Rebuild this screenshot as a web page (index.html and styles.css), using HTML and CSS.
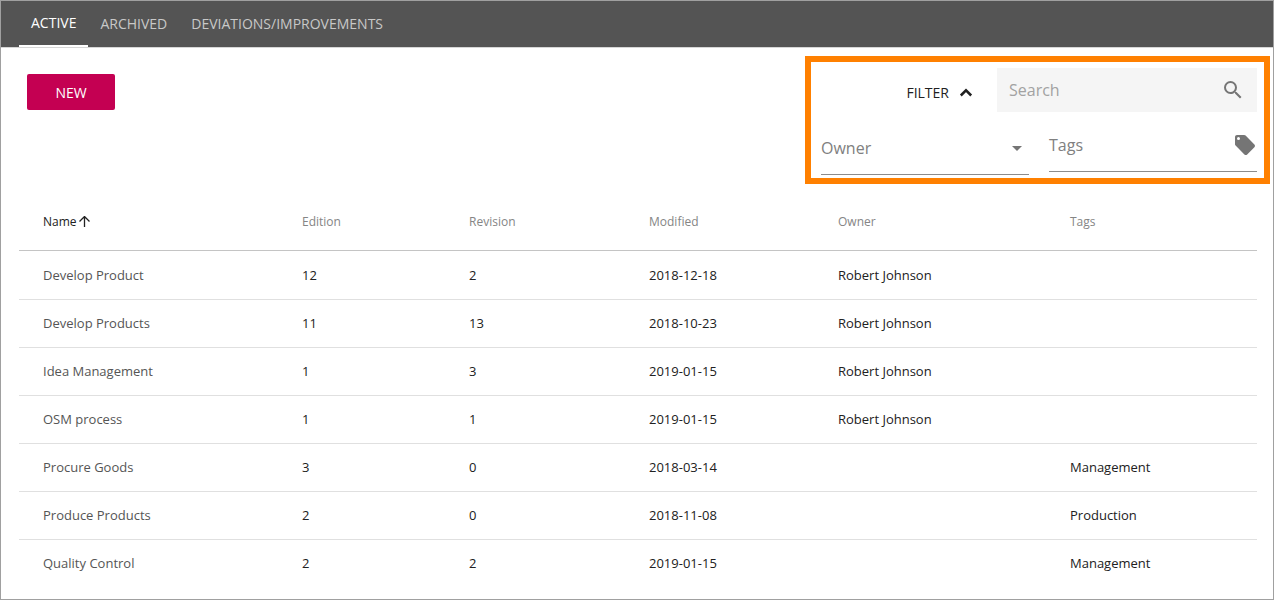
FILE: index.html
```
<!DOCTYPE html>
<html lang="en">
<head>
<meta charset="utf-8">
<title>Processes</title>
<link rel="stylesheet" href="styles.css">
</head>
<body>
<div class="page">
  <nav class="tabs">
    <a class="tab tab-active">ACTIVE</a>
    <a class="tab">ARCHIVED</a>
    <a class="tab">DEVIATIONS/IMPROVEMENTS</a>
  </nav>
  <header class="toolbar">
    <button class="new-button">NEW</button>
    <section class="filter-panel">
      <div class="search-row">
        <div class="filter-toggle">
          <span>FILTER</span>
          <svg width="14" height="9" viewBox="0 0 14 9"><path d="M1.800 7.500 7 2.300 12.200 7.500" fill="none" stroke="#212121" stroke-width="2.500"/></svg>
        </div>
        <div class="search-box">
          <span class="placeholder">Search</span>
          <svg width="24" height="24" viewBox="0 0 24 24" fill="#757575"><path d="M15.5 14h-.79l-.28-.27A6.47 6.47 0 0 0 16 9.5 6.5 6.5 0 1 0 9.5 16c1.61 0 3.09-.59 4.23-1.57l.27.28v.79l5 4.99L20.49 19l-4.99-5zm-6 0C7.01 14 5 11.99 5 9.5S7.01 5 9.5 5 14 7.01 14 9.5 11.99 14 9.5 14z"/></svg>
        </div>
      </div>
      <div class="field-row">
        <div class="field owner-field">
          <span>Owner</span>
          <svg width="10" height="5" viewBox="0 0 10 5"><path d="M0 0h10L5 5z" fill="#757575"/></svg>
        </div>
        <div class="field tags-field">
          <span>Tags</span>
          <svg width="20" height="20" viewBox="0 0 20 20"><path fill="#757575" fill-rule="evenodd" d="M2 0h7.2c.5 0 1 .2 1.4.6l8.8 8.8c.8.8.8 2 0 2.8l-7.2 7.2c-.8.8-2 .8-2.8 0L.6 10.6C.2 10.2 0 9.700 0 9.200V2C0 .9.9 0 2 0zm1.500 2a1.500 1.500 0 1 0 0 3 1.500 1.500 0 0 0 0-3z"/></svg>
        </div>
      </div>
    </section>
  </header>
  <main class="table">
    <div class="row head">
      <span class="sorted">Name<svg width="12" height="12" viewBox="0 0 12 12"><path d="M5.500 11V1M.5 5.500l5-5 5 5" fill="none" stroke="#212121" stroke-width="1.300"/></svg></span>
      <span>Edition</span><span>Revision</span><span>Modified</span><span>Owner</span><span>Tags</span>
    </div>
    <div class="row first"><span class="name">Develop Product</span><span>12</span><span>2</span><span>2018-12-18</span><span>Robert Johnson</span><span></span></div>
    <div class="row"><span class="name">Develop Products</span><span>11</span><span>13</span><span>2018-10-23</span><span>Robert Johnson</span><span></span></div>
    <div class="row"><span class="name">Idea Management</span><span>1</span><span>3</span><span>2019-01-15</span><span>Robert Johnson</span><span></span></div>
    <div class="row"><span class="name">OSM process</span><span>1</span><span>1</span><span>2019-01-15</span><span>Robert Johnson</span><span></span></div>
    <div class="row"><span class="name">Procure Goods</span><span>3</span><span>0</span><span>2018-03-14</span><span></span><span>Management</span></div>
    <div class="row"><span class="name">Produce Products</span><span>2</span><span>0</span><span>2018-11-08</span><span></span><span>Production</span></div>
    <div class="row"><span class="name">Quality Control</span><span>2</span><span>2</span><span>2019-01-15</span><span></span><span>Management</span></div>
  </main>
</div>
</body>
</html>
```
FILE: styles.css
```
* { box-sizing: border-box; }
body {
  margin: 0;
  font-family: "Open Sans", "Noto Sans", sans-serif;
  color: #212121;
  background: #fff;
}
svg { display: block; flex: none; }
.page {
  height: 600px;
  border: 1px solid #a0a0a0;
  overflow: hidden;
}
.tabs {
  display: flex;
  height: 47px;
  padding-left: 18px;
  background: #545454;
  border-bottom: 1px solid #d6d6d6;
}
.tab {
  padding: 0 12px;
  line-height: 46px;
  font-size: 14px;
  color: #c8c8c8;
}
.tab-active {
  color: #fff;
  line-height: 44px;
  border-bottom: 2px solid #fff;
}
.toolbar {
  display: flex;
  justify-content: space-between;
  padding: 8px 3px 0 26px;
}
.new-button {
  width: 88px;
  height: 36px;
  margin-top: 18px;
  padding: 0;
  border: 0;
  border-radius: 2px;
  background: #c40052;
  color: #fff;
  font: 14px "Open Sans", sans-serif;
}
.filter-panel {
  width: 465px;
  height: 128px;
  border: 6px solid #ff8000;
  padding: 6px 7px 0 10px;
}
.search-row { display: flex; justify-content: flex-end; height: 50px; }
.filter-toggle {
  display: flex;
  align-items: center;
  gap: 10px;
  height: 49px;
  margin-right: 24px;
  font-size: 14px;
}
.search-box {
  display: flex;
  align-items: center;
  justify-content: space-between;
  width: 260px;
  height: 44px;
  padding: 0 12px;
  background: #f5f5f5;
  font-size: 16px;
}
.placeholder { color: #a2a2a2; }
.field-row { display: flex; gap: 20px; }
.field {
  display: flex;
  align-items: center;
  justify-content: space-between;
  width: 208px;
  border-bottom: 1px solid #8c8c8c;
  font-size: 16px;
  color: #808080;
}
.owner-field { height: 57px; padding: 4px 7px 0 0; }
.tags-field { height: 54px; padding: 0 2px 0 0; }
.table { margin: 9px 16px 0 18px; font-size: 13px; }
.row {
  display: grid;
  grid-template-columns: 259px 167px 180px 189px 232px 1fr;
  align-items: center;
  height: 48px;
  padding: 0 0 1px 24px;
  border-bottom: 1px solid #e0e0e0;
}
.row:last-child { border-bottom: 0; padding-bottom: 2px; }
.head {
  height: 58px;
  padding-bottom: 0;
  border-color: #c4c4c4;
  font-size: 12px;
  color: #858585;
}
.first { height: 49px; padding-bottom: 0; }
.name { color: #555; }
.sorted { display: flex; align-items: center; gap: 2px; color: #212121; }
```
